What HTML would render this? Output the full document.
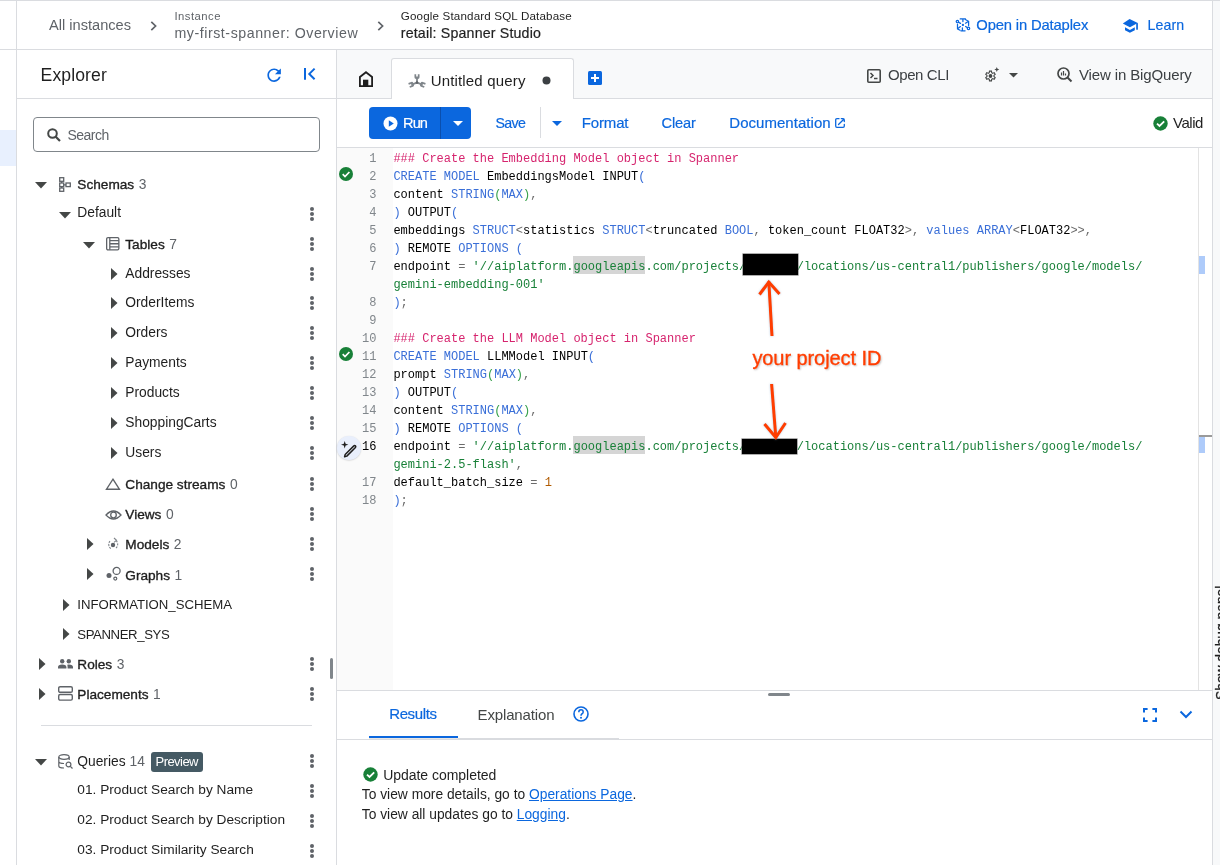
<!DOCTYPE html>
<html><head><meta charset="utf-8"><title>Spanner Studio</title>
<style>
html,body{margin:0;padding:0;width:1220px;height:865px;overflow:hidden;background:#fff;}
body{position:relative;font-family:"Liberation Sans",sans-serif;}
.t{position:absolute;line-height:1;white-space:nowrap;}
.r{position:absolute;box-sizing:border-box;}
svg.r{overflow:visible;}
.code{font-family:"Liberation Mono",monospace;font-size:12px;}
</style></head><body><div id="root" style="position:absolute;left:0;top:0;width:1220px;height:865px;will-change:transform;">
<div class="r" style="left:0.00px;top:0.00px;width:1220.00px;height:1.00px;background:#dadce0;"></div><div class="r" style="left:0.00px;top:49.00px;width:1213.00px;height:1.00px;background:#dadce0;"></div><div class="r" style="left:16.00px;top:0.00px;width:1.00px;height:865.00px;background:#dadce0;"></div><div class="r" style="left:0.00px;top:130.00px;width:16.00px;height:36.00px;background:#e8f0fe;"></div><div class="r" style="left:336.00px;top:49.00px;width:1.00px;height:816.00px;background:#dadce0;"></div><div class="r" style="left:1212.00px;top:0.00px;width:1.00px;height:865.00px;background:#dadce0;"></div><div class="r" style="left:1213.00px;top:1.00px;width:7.00px;height:864.00px;background:#f8f9fa;"></div><div class="t" style="left:49.00px;top:18.00px;font-size:14.61px;color:#5f6368;">All instances</div><svg class="r" style="left:149.50px;top:20.50px;" width="7" height="10" viewBox="0 0 7 10"><path d="M1.3 0.8 L5.6 5 L1.3 9.2" fill="none" stroke="#5f6368" stroke-width="1.7"/></svg><div class="t" style="left:174.50px;top:11.00px;font-size:11.30px;color:#5f6368;letter-spacing:0.469px;">Instance</div><div class="t" style="left:174.50px;top:26.00px;font-size:14.20px;color:#5f6368;letter-spacing:0.546px;">my-first-spanner: Overview</div><svg class="r" style="left:376.50px;top:20.50px;" width="7" height="10" viewBox="0 0 7 10"><path d="M1.3 0.8 L5.6 5 L1.3 9.2" fill="none" stroke="#5f6368" stroke-width="1.7"/></svg><div class="t" style="left:400.80px;top:10.00px;font-size:11.60px;color:#1f1f1f;letter-spacing:0.163px;">Google Standard SQL Database</div><div class="t" style="left:400.80px;top:26.00px;font-size:14.20px;color:#1f1f1f;letter-spacing:0.173px;-webkit-text-stroke:0.2px #1f1f1f;">retail: Spanner Studio</div><svg class="r" style="left:950.00px;top:12.00px;" width="25" height="26" viewBox="0 0 25 26"><g fill="none" stroke="#0b67de" stroke-width="1.25" stroke-linecap="round"><path d="M10.2 6.9 H15.4 M12.9 6.9 V9.6"/><path d="M11.4 18.8 H15.6 M12.9 18.8 V15.8" transform="translate(-0.5 0)"/><path d="M15.3 7.5 L18.6 9.3 V13.5 M15.5 11.2 L17.4 9.9"/><path d="M7.5 12.3 V16.8 L10 18.2 M8.6 15.9 L10.4 14.6"/><circle cx="7.4" cy="9.6" r="1.2"/><path d="M8.5 10.3 L10.5 11.4"/><circle cx="18.5" cy="16.4" r="1.2"/><path d="M15.6 14.5 L17.4 15.6"/></g><rect x="11.9" y="11.9" width="2" height="2" fill="#0b67de"/></svg><div class="t" style="left:976.30px;top:18.00px;font-size:14.80px;color:#0b67de;letter-spacing:-0.157px;-webkit-text-stroke:0.2px #0b67de;">Open in Dataplex</div><svg class="r" style="left:1118.00px;top:12.00px;" width="25" height="26" viewBox="0 0 25 26"><path d="M11.6 7.1 L19.8 11.1 L11.9 15.3 L4.8 11.4 Z" fill="#0b67de"/><rect x="18.2" y="11.1" width="1.7" height="6.6" fill="#0b67de"/><path d="M7 15.3 L11.9 18 L16.8 15.3 V18.2 L11.9 20.8 L7 18.2 Z" fill="#0b67de"/></svg><div class="t" style="left:1147.50px;top:18.00px;font-size:14.20px;color:#0b67de;-webkit-text-stroke:0.15px #0b67de;letter-spacing:0.1px;">Learn</div><div class="t" style="left:40.60px;top:67.00px;font-size:17.60px;color:#1f1f1f;letter-spacing:0.094px;">Explorer</div><svg class="r" style="left:264.10px;top:64.60px;" width="20.25" height="20.25" viewBox="0 0 24 24"><path d="M17.65 6.35C16.2 4.9 14.21 4 12 4c-4.42 0-7.99 3.58-7.99 8s3.57 8 7.99 8c3.73 0 6.84-2.55 7.73-6h-2.08c-.82 2.33-3.04 4-5.65 4-3.31 0-6-2.69-6-6s2.69-6 6-6c1.66 0 3.14.69 4.22 1.78L13 11h7V4l-2.35 2.35z" fill="#0b67de"/></svg><svg class="r" style="left:303.00px;top:68.10px;" width="13" height="12" viewBox="0 0 13 12"><path d="M2 0 V11.7" stroke="#0b67de" stroke-width="2"/><path d="M11.6 0.6 L6.3 5.9 L11.6 11.2" fill="none" stroke="#0b67de" stroke-width="2"/></svg><div class="r" style="left:17.00px;top:98.00px;width:319.00px;height:1.00px;background:#dadce0;"></div><div class="r" style="left:33px;top:117px;width:287px;height:35px;border:1px solid #80868b;border-radius:4px;"></div><svg class="r" style="left:46.50px;top:128.00px;" width="14" height="14" viewBox="0 0 14 14"><circle cx="5.5" cy="5.5" r="4.3" fill="none" stroke="#444746" stroke-width="2"/><path d="M8.5 8.5 L13 13" stroke="#444746" stroke-width="2.2"/></svg><div class="t" style="left:67.40px;top:128.00px;font-size:14.00px;color:#5f6368;letter-spacing:-0.492px;">Search</div><svg class="r" style="left:35.00px;top:182.00px;" width="12" height="7" viewBox="0 0 12 7"><path d="M0 0 H12 L6 6.5 Z" fill="#444746"/></svg><svg class="r" style="left:59.00px;top:176.80px;" width="12" height="15" viewBox="0 0 12 15"><g fill="none" stroke="#5f6368" stroke-width="1.3"><rect x="0.7" y="0.7" width="4" height="3.6"/><rect x="0.7" y="6" width="4" height="3.6"/><rect x="0.7" y="11" width="4" height="3.3"/><rect x="7" y="6" width="4.3" height="3.6"/><path d="M2.7 4.3 V6 M2.7 9.6 V11 M4.7 7.8 H7"/></g></svg><div class="t" style="left:77.30px;top:178.00px;font-size:13.65px;color:#1f1f1f;-webkit-text-stroke:0.35px #1f1f1f;">Schemas</div><div class="t" style="left:138.70px;top:178.00px;font-size:13.80px;color:#5f6368;">3</div><svg class="r" style="left:59.00px;top:212.00px;" width="12" height="7" viewBox="0 0 12 7"><path d="M0 0 H12 L6 6.5 Z" fill="#444746"/></svg><div class="t" style="left:77.30px;top:206.00px;font-size:13.80px;color:#1f1f1f;">Default</div><svg class="r" style="left:309.00px;top:207.00px;" width="6" height="14" viewBox="0 0 6 14"><circle cx="3" cy="2" r="2" fill="#5f6368"/><circle cx="3" cy="7" r="2" fill="#5f6368"/><circle cx="3" cy="12" r="2" fill="#5f6368"/></svg><svg class="r" style="left:83.00px;top:242.00px;" width="12" height="7" viewBox="0 0 12 7"><path d="M0 0 H12 L6 6.5 Z" fill="#444746"/></svg><svg class="r" style="left:106.30px;top:237.40px;" width="13.5" height="13.5" viewBox="0 0 13.5 13.5"><g fill="none" stroke="#5f6368" stroke-width="1.3"><rect x="0.65" y="0.65" width="12.2" height="12.2" rx="1.3"/><path d="M3.8 0.65 V12.85 M3.8 3.7 H12.85 M3.8 6.75 H12.85 M3.8 9.8 H12.85"/></g></svg><div class="t" style="left:125.30px;top:238.00px;font-size:13.65px;color:#1f1f1f;-webkit-text-stroke:0.35px #1f1f1f;">Tables</div><div class="t" style="left:169.26px;top:238.00px;font-size:13.80px;color:#5f6368;">7</div><svg class="r" style="left:309.00px;top:237.00px;" width="6" height="14" viewBox="0 0 6 14"><circle cx="3" cy="2" r="2" fill="#5f6368"/><circle cx="3" cy="7" r="2" fill="#5f6368"/><circle cx="3" cy="12" r="2" fill="#5f6368"/></svg><svg class="r" style="left:111.00px;top:267.60px;" width="7" height="12" viewBox="0 0 7 12"><path d="M0 0 V12 L6.5 6 Z" fill="#444746"/></svg><div class="t" style="left:125.30px;top:267.00px;font-size:13.80px;color:#1f1f1f;">Addresses</div><svg class="r" style="left:309.00px;top:266.60px;" width="6" height="14" viewBox="0 0 6 14"><circle cx="3" cy="2" r="2" fill="#5f6368"/><circle cx="3" cy="7" r="2" fill="#5f6368"/><circle cx="3" cy="12" r="2" fill="#5f6368"/></svg><svg class="r" style="left:111.00px;top:297.47px;" width="7" height="12" viewBox="0 0 7 12"><path d="M0 0 V12 L6.5 6 Z" fill="#444746"/></svg><div class="t" style="left:125.30px;top:296.00px;font-size:13.80px;color:#1f1f1f;">OrderItems</div><svg class="r" style="left:309.00px;top:296.47px;" width="6" height="14" viewBox="0 0 6 14"><circle cx="3" cy="2" r="2" fill="#5f6368"/><circle cx="3" cy="7" r="2" fill="#5f6368"/><circle cx="3" cy="12" r="2" fill="#5f6368"/></svg><svg class="r" style="left:111.00px;top:327.34px;" width="7" height="12" viewBox="0 0 7 12"><path d="M0 0 V12 L6.5 6 Z" fill="#444746"/></svg><div class="t" style="left:125.30px;top:326.00px;font-size:13.80px;color:#1f1f1f;">Orders</div><svg class="r" style="left:309.00px;top:326.34px;" width="6" height="14" viewBox="0 0 6 14"><circle cx="3" cy="2" r="2" fill="#5f6368"/><circle cx="3" cy="7" r="2" fill="#5f6368"/><circle cx="3" cy="12" r="2" fill="#5f6368"/></svg><svg class="r" style="left:111.00px;top:357.21px;" width="7" height="12" viewBox="0 0 7 12"><path d="M0 0 V12 L6.5 6 Z" fill="#444746"/></svg><div class="t" style="left:125.30px;top:356.00px;font-size:13.80px;color:#1f1f1f;">Payments</div><svg class="r" style="left:309.00px;top:356.21px;" width="6" height="14" viewBox="0 0 6 14"><circle cx="3" cy="2" r="2" fill="#5f6368"/><circle cx="3" cy="7" r="2" fill="#5f6368"/><circle cx="3" cy="12" r="2" fill="#5f6368"/></svg><svg class="r" style="left:111.00px;top:387.08px;" width="7" height="12" viewBox="0 0 7 12"><path d="M0 0 V12 L6.5 6 Z" fill="#444746"/></svg><div class="t" style="left:125.30px;top:386.00px;font-size:13.80px;color:#1f1f1f;">Products</div><svg class="r" style="left:309.00px;top:386.08px;" width="6" height="14" viewBox="0 0 6 14"><circle cx="3" cy="2" r="2" fill="#5f6368"/><circle cx="3" cy="7" r="2" fill="#5f6368"/><circle cx="3" cy="12" r="2" fill="#5f6368"/></svg><svg class="r" style="left:111.00px;top:416.95px;" width="7" height="12" viewBox="0 0 7 12"><path d="M0 0 V12 L6.5 6 Z" fill="#444746"/></svg><div class="t" style="left:125.30px;top:416.00px;font-size:13.80px;color:#1f1f1f;">ShoppingCarts</div><svg class="r" style="left:309.00px;top:415.95px;" width="6" height="14" viewBox="0 0 6 14"><circle cx="3" cy="2" r="2" fill="#5f6368"/><circle cx="3" cy="7" r="2" fill="#5f6368"/><circle cx="3" cy="12" r="2" fill="#5f6368"/></svg><svg class="r" style="left:111.00px;top:446.82px;" width="7" height="12" viewBox="0 0 7 12"><path d="M0 0 V12 L6.5 6 Z" fill="#444746"/></svg><div class="t" style="left:125.30px;top:446.00px;font-size:13.80px;color:#1f1f1f;">Users</div><svg class="r" style="left:309.00px;top:445.82px;" width="6" height="14" viewBox="0 0 6 14"><circle cx="3" cy="2" r="2" fill="#5f6368"/><circle cx="3" cy="7" r="2" fill="#5f6368"/><circle cx="3" cy="12" r="2" fill="#5f6368"/></svg><svg class="r" style="left:105.00px;top:478.00px;" width="16" height="13" viewBox="0 0 16 13"><path d="M7.95 1.2 L14.4 11.2 H1.5 Z" fill="none" stroke="#5f6368" stroke-width="1.4"/></svg><div class="t" style="left:125.30px;top:478.00px;font-size:13.65px;color:#1f1f1f;-webkit-text-stroke:0.35px #1f1f1f;">Change streams</div><div class="t" style="left:229.95px;top:478.00px;font-size:13.80px;color:#5f6368;">0</div><svg class="r" style="left:309.00px;top:477.00px;" width="6" height="14" viewBox="0 0 6 14"><circle cx="3" cy="2" r="2" fill="#5f6368"/><circle cx="3" cy="7" r="2" fill="#5f6368"/><circle cx="3" cy="12" r="2" fill="#5f6368"/></svg><svg class="r" style="left:104.50px;top:509.00px;" width="17" height="12" viewBox="0 0 17 12"><g fill="none" stroke="#5f6368" stroke-width="1.3"><path d="M1 6 Q8.5 -2 16 6 Q8.5 14 1 6 Z"/><circle cx="8.5" cy="6" r="2.8"/></g></svg><div class="t" style="left:125.30px;top:508.00px;font-size:13.65px;color:#1f1f1f;-webkit-text-stroke:0.35px #1f1f1f;">Views</div><div class="t" style="left:165.97px;top:508.00px;font-size:13.80px;color:#5f6368;">0</div><svg class="r" style="left:309.00px;top:507.00px;" width="6" height="14" viewBox="0 0 6 14"><circle cx="3" cy="2" r="2" fill="#5f6368"/><circle cx="3" cy="7" r="2" fill="#5f6368"/><circle cx="3" cy="12" r="2" fill="#5f6368"/></svg><svg class="r" style="left:86.50px;top:538.20px;" width="7" height="12" viewBox="0 0 7 12"><path d="M0 0 V12 L6.5 6 Z" fill="#444746"/></svg><svg class="r" style="left:107.00px;top:536.50px;" width="13" height="14" viewBox="0 0 13 14"><g fill="none" stroke="#80868b" stroke-width="1.1"><path d="M3 4.2 A5 5 0 0 0 4.5 12 M9 11 A5 5 0 0 0 9 3.5" stroke-dasharray="2 1"/><path d="M7 1 L9.5 3.3 L7 5.4"/></g><circle cx="6" cy="8" r="2.2" fill="#5f6368"/></svg><div class="t" style="left:125.30px;top:538.00px;font-size:13.65px;color:#1f1f1f;-webkit-text-stroke:0.35px #1f1f1f;">Models</div><div class="t" style="left:173.80px;top:538.00px;font-size:13.80px;color:#5f6368;">2</div><svg class="r" style="left:309.00px;top:537.00px;" width="6" height="14" viewBox="0 0 6 14"><circle cx="3" cy="2" r="2" fill="#5f6368"/><circle cx="3" cy="7" r="2" fill="#5f6368"/><circle cx="3" cy="12" r="2" fill="#5f6368"/></svg><svg class="r" style="left:86.50px;top:568.40px;" width="7" height="12" viewBox="0 0 7 12"><path d="M0 0 V12 L6.5 6 Z" fill="#444746"/></svg><svg class="r" style="left:105.00px;top:565.50px;" width="17" height="17" viewBox="0 0 17 17"><circle cx="4" cy="9.4" r="2.5" fill="#5f6368"/><circle cx="11.6" cy="4.9" r="3.5" fill="none" stroke="#5f6368" stroke-width="1.3"/><circle cx="10.3" cy="12.6" r="1.5" fill="none" stroke="#5f6368" stroke-width="1.2"/></svg><div class="t" style="left:125.30px;top:569.00px;font-size:13.65px;color:#1f1f1f;-webkit-text-stroke:0.35px #1f1f1f;">Graphs</div><div class="t" style="left:174.56px;top:569.00px;font-size:13.80px;color:#5f6368;">1</div><svg class="r" style="left:309.00px;top:567.00px;" width="6" height="14" viewBox="0 0 6 14"><circle cx="3" cy="2" r="2" fill="#5f6368"/><circle cx="3" cy="7" r="2" fill="#5f6368"/><circle cx="3" cy="12" r="2" fill="#5f6368"/></svg><svg class="r" style="left:63.00px;top:598.60px;" width="7" height="12" viewBox="0 0 7 12"><path d="M0 0 V12 L6.5 6 Z" fill="#444746"/></svg><div class="t" style="left:77.30px;top:598.00px;font-size:13.20px;color:#1f1f1f;letter-spacing:-0.025px;">INFORMATION_SCHEMA</div><svg class="r" style="left:63.00px;top:628.20px;" width="7" height="12" viewBox="0 0 7 12"><path d="M0 0 V12 L6.5 6 Z" fill="#444746"/></svg><div class="t" style="left:77.30px;top:628.00px;font-size:13.20px;color:#1f1f1f;letter-spacing:-0.409px;">SPANNER_SYS</div><svg class="r" style="left:39.00px;top:658.00px;" width="7" height="12" viewBox="0 0 7 12"><path d="M0 0 V12 L6.5 6 Z" fill="#444746"/></svg><svg class="r" style="left:57.50px;top:659.00px;" width="15" height="10" viewBox="0 0 15 10"><g fill="#5f6368"><circle cx="4.2" cy="2.3" r="2.2"/><circle cx="10.8" cy="2.3" r="2.2"/><path d="M0 9.6 V8.2 Q0 5.6 4.2 5.6 Q8.4 5.6 8.4 8.2 V9.6 Z"/><path d="M9.2 5.8 Q10 5.6 10.8 5.6 Q15 5.6 15 8.2 V9.6 H9.6 V8.2 Q9.6 6.8 9.2 5.8 Z"/></g></svg><div class="t" style="left:77.30px;top:658.00px;font-size:13.65px;color:#1f1f1f;-webkit-text-stroke:0.35px #1f1f1f;">Roles</div><div class="t" style="left:116.70px;top:658.00px;font-size:13.80px;color:#5f6368;">3</div><svg class="r" style="left:309.00px;top:657.00px;" width="6" height="14" viewBox="0 0 6 14"><circle cx="3" cy="2" r="2" fill="#5f6368"/><circle cx="3" cy="7" r="2" fill="#5f6368"/><circle cx="3" cy="12" r="2" fill="#5f6368"/></svg><svg class="r" style="left:39.00px;top:688.00px;" width="7" height="12" viewBox="0 0 7 12"><path d="M0 0 V12 L6.5 6 Z" fill="#444746"/></svg><svg class="r" style="left:57.50px;top:686.00px;" width="15" height="15" viewBox="0 0 15 15"><g fill="none" stroke="#5f6368" stroke-width="1.4"><rect x="0.7" y="0.7" width="13.6" height="5.6" rx="1.4"/><rect x="0.7" y="8.5" width="13.6" height="5.6" rx="1.4"/></g></svg><div class="t" style="left:77.30px;top:688.00px;font-size:13.65px;color:#1f1f1f;-webkit-text-stroke:0.35px #1f1f1f;">Placements</div><div class="t" style="left:153.12px;top:688.00px;font-size:13.80px;color:#5f6368;">1</div><svg class="r" style="left:309.00px;top:687.00px;" width="6" height="14" viewBox="0 0 6 14"><circle cx="3" cy="2" r="2" fill="#5f6368"/><circle cx="3" cy="7" r="2" fill="#5f6368"/><circle cx="3" cy="12" r="2" fill="#5f6368"/></svg><div class="r" style="left:41.00px;top:725.00px;width:271.00px;height:1.00px;background:#dadce0;"></div><svg class="r" style="left:35.00px;top:759.00px;" width="12" height="7" viewBox="0 0 12 7"><path d="M0 0 H12 L6 6.5 Z" fill="#444746"/></svg><svg class="r" style="left:58.00px;top:753.50px;" width="15" height="15" viewBox="0 0 15 15"><g fill="none" stroke="#5f6368" stroke-width="1.2"><ellipse cx="6" cy="3" rx="5.2" ry="2.3"/><path d="M0.8 3 V12 Q0.8 14 6 14 M0.8 7.5 Q0.8 9.5 6 9.5"/><path d="M11.2 3 V6"/><circle cx="10.5" cy="10.5" r="2.4"/><path d="M12.3 12.3 L14.5 14.5"/></g></svg><div class="t" style="left:77.30px;top:755.00px;font-size:13.80px;color:#1f1f1f;">Queries</div><div class="t" style="left:129.62px;top:755.00px;font-size:13.80px;color:#5f6368;">14</div><div class="r" style="left:151px;top:752px;width:52px;height:20px;background:#455a64;border-radius:3px;"></div><div class="t" style="left:155.50px;top:755.00px;font-size:13.00px;color:#ffffff;letter-spacing:-0.540px;">Preview</div><svg class="r" style="left:309.00px;top:754.00px;" width="6" height="14" viewBox="0 0 6 14"><circle cx="3" cy="2" r="2" fill="#5f6368"/><circle cx="3" cy="7" r="2" fill="#5f6368"/><circle cx="3" cy="12" r="2" fill="#5f6368"/></svg><div class="t" style="left:77.30px;top:783.00px;font-size:13.70px;color:#1f1f1f;">01. Product Search by Name</div><svg class="r" style="left:309.00px;top:784.00px;" width="6" height="14" viewBox="0 0 6 14"><circle cx="3" cy="2" r="2" fill="#5f6368"/><circle cx="3" cy="7" r="2" fill="#5f6368"/><circle cx="3" cy="12" r="2" fill="#5f6368"/></svg><div class="t" style="left:77.30px;top:813.00px;font-size:13.70px;color:#1f1f1f;">02. Product Search by Description</div><svg class="r" style="left:309.00px;top:814.00px;" width="6" height="14" viewBox="0 0 6 14"><circle cx="3" cy="2" r="2" fill="#5f6368"/><circle cx="3" cy="7" r="2" fill="#5f6368"/><circle cx="3" cy="12" r="2" fill="#5f6368"/></svg><div class="t" style="left:77.30px;top:843.00px;font-size:13.70px;color:#1f1f1f;">03. Product Similarity Search</div><svg class="r" style="left:309.00px;top:844.00px;" width="6" height="14" viewBox="0 0 6 14"><circle cx="3" cy="2" r="2" fill="#5f6368"/><circle cx="3" cy="7" r="2" fill="#5f6368"/><circle cx="3" cy="12" r="2" fill="#5f6368"/></svg><div class="r" style="left:330px;top:658px;width:3px;height:21px;background:#80868b;border-radius:2px;"></div><div class="r" style="left:337.00px;top:50.00px;width:875.00px;height:48.00px;background:#f8f9fa;"></div><div class="r" style="left:337.00px;top:98.00px;width:875.00px;height:1.00px;background:#dadce0;"></div><svg class="r" style="left:359.00px;top:71.00px;" width="14" height="16" viewBox="0 0 14 16"><path d="M7 1.2 L13.1 6 V15.1 H0.9 V6 Z" fill="none" stroke="#1f1f1f" stroke-width="1.8" stroke-linejoin="miter"/><rect x="4" y="8.7" width="5.3" height="6.4" fill="#1f1f1f"/></svg><div class="r" style="left:391px;top:58px;width:183px;height:41px;background:#fff;border:1px solid #dadce0;border-bottom:none;border-radius:3px 3px 0 0;"></div><svg class="r" style="left:404.00px;top:68.00px;" width="26" height="24" viewBox="0 0 26 24"><g transform="translate(13,14.6) scale(0.82)"><path d="M-3.1 -10.2 H-1 V-7.6 Q0 -6.8 1 -7.6 V-10.2 H3.1 V-6.4 Q3.1 -4.4 1.1 -4.4 V0 H-1.1 V-4.4 Q-3.1 -4.4 -3.1 -6.4 Z" fill="#80868b"/><g transform="rotate(110)"><path d="M-3.1 -10.2 H-1 V-7.6 Q0 -6.8 1 -7.6 V-10.2 H3.1 V-6.4 Q3.1 -4.4 1.1 -4.4 V0 H-1.1 V-4.4 Q-3.1 -4.4 -3.1 -6.4 Z" fill="#80868b"/></g><g transform="rotate(-110)"><path d="M-3.1 -10.2 H-1 V-7.6 Q0 -6.8 1 -7.6 V-10.2 H3.1 V-6.4 Q3.1 -4.4 1.1 -4.4 V0 H-1.1 V-4.4 Q-3.1 -4.4 -3.1 -6.4 Z" fill="#80868b"/></g><circle r="1.6" fill="#5f6368"/></g></svg><div class="t" style="left:430.70px;top:73.00px;font-size:15.00px;color:#1f1f1f;letter-spacing:0.165px;">Untitled query</div><svg class="r" style="left:541.50px;top:75.50px;" width="9" height="9" viewBox="0 0 9 9"><circle cx="4.5" cy="4.5" r="4" fill="#3c4043"/></svg><svg class="r" style="left:588.00px;top:71.00px;" width="14" height="14" viewBox="0 0 14 14"><rect x="0" y="0" width="14" height="14" rx="1.5" fill="#0b67de"/><path d="M7 3 V11 M3 7 H11" stroke="#fff" stroke-width="2"/></svg><svg class="r" style="left:867.00px;top:68.50px;" width="14" height="14" viewBox="0 0 14 14"><rect x="0.8" y="0.8" width="12.4" height="12.4" rx="1" fill="none" stroke="#444746" stroke-width="1.6"/><path d="M3.5 4 L6 6.5 L3.5 9" fill="none" stroke="#444746" stroke-width="1.5"/><path d="M7 9.5 H10.5" stroke="#444746" stroke-width="1.5"/></svg><div class="t" style="left:888.00px;top:67.00px;font-size:15.00px;color:#3c4043;letter-spacing:-0.415px;">Open CLI</div><svg class="r" style="left:983.50px;top:67.00px;" width="16" height="16" viewBox="0 0 16 16"><g transform="translate(0,2.5) scale(0.0135)"><path transform="translate(0,960)" d="m370-80-16-128q-13-5-24.5-12T307-235l-119 50L78-375l103-78q-1-7-1-13.5v-27q0-6.5 1-13.5L78-585l110-190 119 50q11-8 23-15t24-12l16-128h220l16 128q13 5 24.5 12t22.5 15l119-50 110 190-103 78q1 7 1 13.5v27q0 6.5-2 13.5l103 78-110 190-118-50q-11 8-23 15t-24 12L590-80H370Zm70-80h79l14-106q31-8 57.5-23.5T639-327l99 41 39-68-86-65q5-14 7-29.5t2-31.5q0-16-2-31.5t-7-29.5l86-65-39-68-99 42q-22-23-48.5-38.5T533-694l-13-106h-79l-14 106q-31 8-57.5 23.5T321-633l-99-41-39 68 86 64q-5 15-7 30t-2 32q0 16 2 31t7 30l-86 65 39 68 99-42q22 23 48.5 38.5T427-266l13 106Z" fill="#444746"/></g><circle cx="6.5" cy="9" r="1.9" fill="#444746"/><path d="M12.8 0 L13.5 1.8 L15.3 2.5 L13.5 3.2 L12.8 5 L12.1 3.2 L10.3 2.5 L12.1 1.8 Z" fill="#444746"/></svg><svg class="r" style="left:1009.00px;top:72.50px;" width="9" height="5" viewBox="0 0 9 5"><path d="M0 0 H9 L4.5 4.5 Z" fill="#444746"/></svg><svg class="r" style="left:1057.00px;top:66.50px;" width="15" height="15" viewBox="0 0 15 15"><circle cx="6.5" cy="6.5" r="5.5" fill="none" stroke="#444746" stroke-width="1.7"/><path d="M10.5 10.5 L14.5 14.5" stroke="#444746" stroke-width="2"/><path d="M4.5 5.5 V8.5 M6.5 4 V8.5 M8.5 6.5 V8.5" stroke="#444746" stroke-width="1.2"/></svg><div class="t" style="left:1079.00px;top:67.00px;font-size:15.00px;color:#3c4043;letter-spacing:-0.132px;">View in BigQuery</div><div class="r" style="left:369px;top:107px;width:102px;height:32px;background:#0b67de;border-radius:4px;"></div><div class="r" style="left:440.00px;top:107.00px;width:1.00px;height:32.00px;background:#0a4fae;"></div><svg class="r" style="left:382.50px;top:115.50px;" width="15" height="15" viewBox="0 0 15 15"><circle cx="7.5" cy="7.5" r="7" fill="#fff"/><path d="M5.8 4.3 V10.7 L10.8 7.5 Z" fill="#0b67de"/></svg><div class="t" style="left:403.00px;top:116.00px;font-size:14.60px;color:#fff;letter-spacing:-0.892px;-webkit-text-stroke:0.2px #fff;">Run</div><svg class="r" style="left:453.00px;top:120.50px;" width="10" height="5" viewBox="0 0 10 5"><path d="M0 0 H10 L5 5 Z" fill="#fff"/></svg><div class="t" style="left:495.60px;top:116.00px;font-size:14.20px;color:#0b67de;letter-spacing:-0.689px;-webkit-text-stroke:0.2px #0b67de;">Save</div><div class="r" style="left:539.50px;top:107.00px;width:1.00px;height:31.00px;background:#dadce0;"></div><svg class="r" style="left:552.00px;top:120.50px;" width="10" height="5" viewBox="0 0 10 5"><path d="M0 0 H10 L5 5 Z" fill="#0b67de"/></svg><div class="t" style="left:581.80px;top:115.00px;font-size:15.00px;color:#0b67de;letter-spacing:-0.161px;-webkit-text-stroke:0.2px #0b67de;">Format</div><div class="t" style="left:661.50px;top:116.00px;font-size:14.60px;color:#0b67de;letter-spacing:-0.123px;-webkit-text-stroke:0.2px #0b67de;">Clear</div><div class="t" style="left:729.30px;top:115.00px;font-size:15.00px;color:#0b67de;letter-spacing:0.034px;-webkit-text-stroke:0.2px #0b67de;">Documentation</div><svg class="r" style="left:835.00px;top:118.00px;" width="10" height="10" viewBox="0 0 10 10"><g fill="none" stroke="#0b67de" stroke-width="1.3" stroke-linecap="round"><path d="M4 0.7 H1.9 Q0.7 0.7 0.7 1.9 V8.1 Q0.7 9.3 1.9 9.3 H8.1 Q9.3 9.3 9.3 8.1 V6.3"/><path d="M6.3 0.7 H8.1 Q9.3 0.7 9.3 1.9 V3.6 M8.8 1.2 L3.5 6.5"/></g></svg><svg class="r" style="left:1152.50px;top:115.50px;" width="15" height="15" viewBox="0 0 15 15"><circle cx="7.5" cy="7.5" r="7.2" fill="#188038"/><path d="M4 7.6 L6.5 10 L11.2 5.3" fill="none" stroke="#fff" stroke-width="1.8"/></svg><div class="t" style="left:1173.00px;top:115.00px;font-size:15.00px;color:#1f1f1f;letter-spacing:-0.461px;">Valid</div><div class="r" style="left:337.00px;top:147.00px;width:875.00px;height:1.00px;background:#dadce0;"></div><div class="r" style="left:337.00px;top:148.00px;width:56.00px;height:542.00px;background:#fafafa;"></div><div class="r" style="left:1198.00px;top:148.00px;width:1.00px;height:542.00px;background:#e3e3e3;"></div><div class="r" style="left:1199.00px;top:256.00px;width:6.00px;height:18.00px;background:#aecbfa;"></div><div class="r" style="left:1199.00px;top:435.00px;width:13.00px;height:2.00px;background:#9a9a9a;"></div><div class="r" style="left:1199.00px;top:437.00px;width:6.00px;height:16.00px;background:#aecbfa;"></div><div class="t code" style="left:369.30px;top:153.00px;color:#80868b">1</div><div class="t code" style="left:369.30px;top:171.00px;color:#80868b">2</div><div class="t code" style="left:369.30px;top:189.00px;color:#80868b">3</div><div class="t code" style="left:369.30px;top:207.00px;color:#80868b">4</div><div class="t code" style="left:369.30px;top:225.00px;color:#80868b">5</div><div class="t code" style="left:369.30px;top:243.00px;color:#80868b">6</div><div class="t code" style="left:369.30px;top:261.00px;color:#80868b">7</div><div class="t code" style="left:369.30px;top:297.00px;color:#80868b">8</div><div class="t code" style="left:369.30px;top:315.00px;color:#80868b">9</div><div class="t code" style="left:362.10px;top:333.00px;color:#80868b">10</div><div class="t code" style="left:362.10px;top:351.00px;color:#80868b">11</div><div class="t code" style="left:362.10px;top:369.00px;color:#80868b">12</div><div class="t code" style="left:362.10px;top:387.00px;color:#80868b">13</div><div class="t code" style="left:362.10px;top:405.00px;color:#80868b">14</div><div class="t code" style="left:362.10px;top:423.00px;color:#80868b">15</div><div class="t code" style="left:362.10px;top:441.00px;color:#000">16</div><div class="t code" style="left:362.10px;top:477.00px;color:#80868b">17</div><div class="t code" style="left:362.10px;top:495.00px;color:#80868b">18</div><svg class="r" style="left:339.00px;top:167.00px;" width="14" height="14" viewBox="0 0 14 14"><circle cx="7" cy="7" r="7" fill="#188038"/><path d="M3.7 7.2 L6 9.5 L10.4 5" fill="none" stroke="#fff" stroke-width="1.7"/></svg><svg class="r" style="left:339.00px;top:347.00px;" width="14" height="14" viewBox="0 0 14 14"><circle cx="7" cy="7" r="7" fill="#188038"/><path d="M3.7 7.2 L6 9.5 L10.4 5" fill="none" stroke="#fff" stroke-width="1.7"/></svg><div class="r" style="left:337.3px;top:436.2px;width:23.6px;height:23.6px;border-radius:50%;background:#e9effc;box-shadow:0 0.5px 1.5px rgba(0,0,0,0.18);"></div><svg class="r" style="left:337.00px;top:436.00px;" width="24" height="24" viewBox="0 0 24 24"><path d="M8.2 18.5 L16.6 10.1 Q17.6 9.1 18.4 9.9 Q19.2 10.7 18.2 11.7 L9.8 20.1 L7.6 20.7 Z" fill="none" stroke="#1f1f1f" stroke-width="1.5" stroke-linejoin="round"/><path d="M7.7 5 L8.6 7.8 L11.4 8.7 L8.6 9.6 L7.7 12.4 L6.8 9.6 L4 8.7 L6.8 7.8 Z" fill="#1f1f1f"/></svg><div class="t code" style="left:393.40px;top:153.00px;"><span style="color:#d6246e">### Create the Embedding Model object in Spanner</span></div><div class="t code" style="left:393.40px;top:171.00px;"><span style="color:#3a6fd8">CREATE MODEL</span><span style="color:#000000"> EmbeddingsModel INPUT</span><span style="color:#3a6fd8">(</span></div><div class="t code" style="left:393.40px;top:189.00px;"><span style="color:#000000">content </span><span style="color:#3a6fd8">STRING</span><span style="color:#37a14b">(</span><span style="color:#3a6fd8">MAX</span><span style="color:#37a14b">)</span><span style="color:#6b6b6b">,</span></div><div class="t code" style="left:393.40px;top:207.00px;"><span style="color:#3a6fd8">)</span><span style="color:#000000"> OUTPUT</span><span style="color:#3a6fd8">(</span></div><div class="t code" style="left:393.40px;top:225.00px;"><span style="color:#000000">embeddings </span><span style="color:#3a6fd8">STRUCT</span><span style="color:#6b6b6b">&lt;</span><span style="color:#000000">statistics </span><span style="color:#3a6fd8">STRUCT</span><span style="color:#6b6b6b">&lt;</span><span style="color:#000000">truncated </span><span style="color:#3a6fd8">BOOL</span><span style="color:#6b6b6b">,</span><span style="color:#000000"> token_count FLOAT32</span><span style="color:#6b6b6b">&gt;, </span><span style="color:#3a6fd8">values</span><span style="color:#000000"> </span><span style="color:#3a6fd8">ARRAY</span><span style="color:#6b6b6b">&lt;</span><span style="color:#000000">FLOAT32</span><span style="color:#6b6b6b">&gt;&gt;,</span></div><div class="t code" style="left:393.40px;top:243.00px;"><span style="color:#3a6fd8">)</span><span style="color:#000000"> REMOTE </span><span style="color:#3a6fd8">OPTIONS</span><span style="color:#3a6fd8"> (</span></div><div class="t code" style="left:393.40px;top:261.00px;"><span style="color:#000000">endpoint </span><span style="color:#6b6b6b">=</span><span style="color:#000000"> </span><span style="color:#188038">'//aiplatform.</span><span style="color:#188038;background:#d5d5d5;padding:4px 0 0.4px 0">googleapis</span><span style="color:#188038">.com/projects/</span><span style="color:#188038">XXXXXXX</span><span style="color:#188038">/locations/us-central1/publishers/google/models/</span></div><div class="t code" style="left:393.40px;top:279.00px;"><span style="color:#188038">gemini-embedding-001'</span></div><div class="t code" style="left:393.40px;top:297.00px;"><span style="color:#3a6fd8">)</span><span style="color:#6b6b6b">;</span></div><div class="t code" style="left:393.40px;top:333.00px;"><span style="color:#d6246e">### Create the LLM Model object in Spanner</span></div><div class="t code" style="left:393.40px;top:351.00px;"><span style="color:#3a6fd8">CREATE MODEL</span><span style="color:#000000"> LLMModel INPUT</span><span style="color:#3a6fd8">(</span></div><div class="t code" style="left:393.40px;top:369.00px;"><span style="color:#000000">prompt </span><span style="color:#3a6fd8">STRING</span><span style="color:#37a14b">(</span><span style="color:#3a6fd8">MAX</span><span style="color:#37a14b">)</span><span style="color:#6b6b6b">,</span></div><div class="t code" style="left:393.40px;top:387.00px;"><span style="color:#3a6fd8">)</span><span style="color:#000000"> OUTPUT</span><span style="color:#3a6fd8">(</span></div><div class="t code" style="left:393.40px;top:405.00px;"><span style="color:#000000">content </span><span style="color:#3a6fd8">STRING</span><span style="color:#37a14b">(</span><span style="color:#3a6fd8">MAX</span><span style="color:#37a14b">)</span><span style="color:#6b6b6b">,</span></div><div class="t code" style="left:393.40px;top:423.00px;"><span style="color:#3a6fd8">)</span><span style="color:#000000"> REMOTE </span><span style="color:#3a6fd8">OPTIONS</span><span style="color:#3a6fd8"> (</span></div><div class="t code" style="left:393.40px;top:441.00px;"><span style="color:#000000">endpoint </span><span style="color:#6b6b6b">=</span><span style="color:#000000"> </span><span style="color:#188038">'//aiplatform.</span><span style="color:#188038;background:#d5d5d5;padding:4px 0 0.4px 0">googleapis</span><span style="color:#188038">.com/projects/</span><span style="color:#188038">XXXXXXX</span><span style="color:#188038">/locations/us-central1/publishers/google/models/</span></div><div class="t code" style="left:393.40px;top:459.00px;"><span style="color:#188038">gemini-2.5-flash'</span><span style="color:#6b6b6b">,</span></div><div class="t code" style="left:393.40px;top:477.00px;"><span style="color:#000000">default_batch_size </span><span style="color:#6b6b6b">=</span><span style="color:#000000"> </span><span style="color:#b05a00">1</span></div><div class="t code" style="left:393.40px;top:495.00px;"><span style="color:#3a6fd8">)</span><span style="color:#6b6b6b">;</span></div><div class="r" style="left:743px;top:254px;width:55px;height:21px;background:#000;box-shadow:0 0 0 0.6px #777;"></div><div class="r" style="left:742px;top:439px;width:55px;height:15px;background:#000;box-shadow:0 0 0 0.6px #777;"></div><svg class="r" style="left:0;top:0" width="1220" height="865"><g fill="none" stroke="#ff3d00" stroke-width="3" stroke-linecap="butt" stroke-linejoin="miter" style="filter:drop-shadow(0 0 1px rgba(120,160,200,0.5))"><path d="M768.8 281.5 L772 336"/><path d="M759.5 294.5 L768.8 282 L779.5 294"/><path d="M771.6 384 L775.8 437"/><path d="M764.5 424 L775.8 437.5 L785.5 423"/></g></svg><div class="t" style="left:752.40px;top:348.00px;font-size:20.00px;color:#ff3d00;letter-spacing:-0.075px;-webkit-text-stroke:0.35px #ff3d00;text-shadow:0 0 1px #fff,1px 1px 2px rgba(0,0,0,0.28);">your project ID</div><div class="r" style="left:337.00px;top:690.00px;width:875.00px;height:1.00px;background:#dadce0;"></div><div class="r" style="left:768px;top:693px;width:22px;height:3px;background:#80868b;border-radius:2px;"></div><div class="t" style="left:389.20px;top:706.00px;font-size:15.00px;color:#0b67de;letter-spacing:-0.370px;-webkit-text-stroke:0.2px #0b67de;">Results</div><div class="t" style="left:477.60px;top:707.00px;font-size:15.00px;color:#444746;letter-spacing:-0.149px;">Explanation</div><svg class="r" style="left:573.00px;top:706.00px;" width="16" height="16" viewBox="0 0 16 16"><circle cx="8" cy="8" r="7" fill="none" stroke="#0b67de" stroke-width="1.6"/><path d="M5.8 6.2 Q5.8 3.8 8 3.8 Q10.2 3.8 10.2 6 Q10.2 7.3 8.8 8 Q8 8.5 8 9.8" fill="none" stroke="#0b67de" stroke-width="1.5"/><circle cx="8" cy="11.8" r="1" fill="#0b67de"/></svg><div class="r" style="left:337.00px;top:739.00px;width:875.00px;height:1.00px;background:#dadce0;"></div><div class="r" style="left:369.00px;top:738.00px;width:250.00px;height:2.00px;background:#d9dbdf;"></div><div class="r" style="left:369.00px;top:738.00px;width:89.00px;height:1.00px;background:#ebe7e4;"></div><div class="r" style="left:369.00px;top:736.00px;width:89.00px;height:2.00px;background:#0b67de;"></div><svg class="r" style="left:1143.00px;top:708.00px;" width="14" height="14" viewBox="0 0 14 14"><g fill="none" stroke="#0b67de" stroke-width="2"><path d="M1 4.6 V1 H4.6 M9.4 1 H13 V4.6 M13 9.4 V13 H9.4 M4.6 13 H1 V9.4"/></g></svg><svg class="r" style="left:1179.00px;top:710.00px;" width="14" height="9" viewBox="0 0 14 9"><path d="M1.5 1.5 L7 7 L12.5 1.5" fill="none" stroke="#0b67de" stroke-width="2"/></svg><svg class="r" style="left:362.50px;top:766.50px;" width="15" height="15" viewBox="0 0 15 15"><circle cx="7.5" cy="7.5" r="7.2" fill="#188038"/><path d="M4 7.6 L6.5 10 L11.2 5.3" fill="none" stroke="#fff" stroke-width="1.8"/></svg><div class="t" style="left:383.20px;top:768.00px;font-size:14.00px;color:#1f1f1f;letter-spacing:-0.035px;">Update completed</div><div class="t" style="left:361.80px;top:788.00px;font-size:13.80px;color:#1f1f1f;">To view more details, go to </div><div class="t" style="left:529.01px;top:788.00px;font-size:13.80px;color:#0b67de;text-decoration:underline;">Operations Page</div><div class="t" style="left:632.58px;top:788.00px;font-size:13.80px;color:#1f1f1f;">.</div><div class="t" style="left:361.80px;top:808.00px;font-size:13.80px;color:#1f1f1f;">To view all updates go to </div><div class="t" style="left:516.76px;top:808.00px;font-size:13.80px;color:#0b67de;text-decoration:underline;">Logging</div><div class="t" style="left:565.88px;top:808.00px;font-size:13.80px;color:#1f1f1f;">.</div><div class="t" style="left:1215px;top:700px;font-size:13.8px;color:#1f1f1f;-webkit-text-stroke:0.3px #1f1f1f;transform-origin:0 0;transform:rotate(-90deg);">Show debug panel</div>
</div></body></html>
